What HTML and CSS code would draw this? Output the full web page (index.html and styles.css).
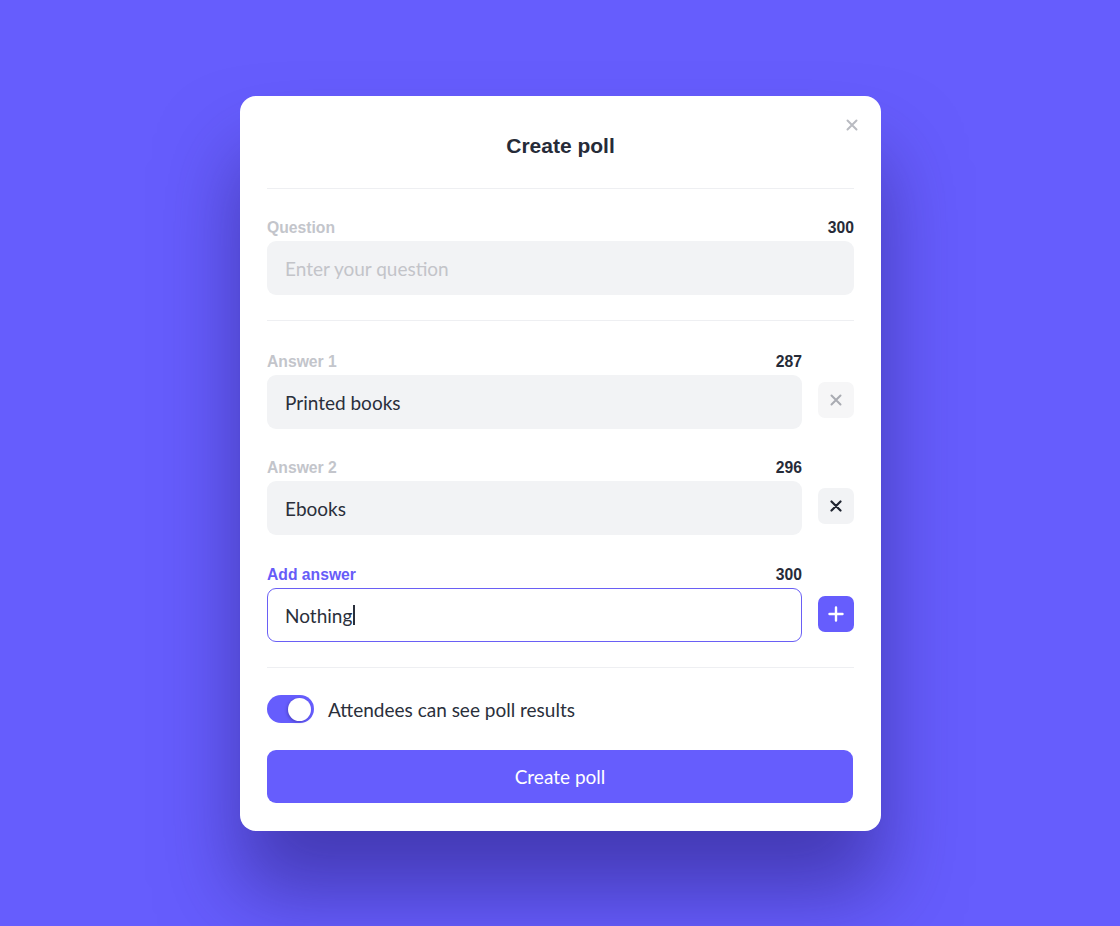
FILE: index.html
```html
<!DOCTYPE html>
<html lang="en">
<head>
    <meta charset="UTF-8"/>
    <meta name="viewport" content="width=device-width, initial-scale=1.0"/>
    <title>Create poll</title>
    <link rel="stylesheet" href="styles.css">
</head>
<body>
<div class="modal">
    <button class="close" aria-label="Close">
        <svg width="12" height="12" viewBox="0 0 12 12"><path d="M1.5 1.5l9 9M10.5 1.5l-9 9" stroke="currentColor" stroke-width="2" stroke-linecap="round"/></svg>
    </button>
    <h1 class="title">Create poll</h1>

    <div class="section">
        <div class="field">
            <div class="field-head">
                <span class="label">Question</span>
                <span class="count">300</span>
            </div>
            <input type="text" class="input" placeholder="Enter your question"/>
        </div>
    </div>

    <div class="section answers">
        <div class="answer">
            <div class="field">
                <div class="field-head">
                    <span class="label">Answer 1</span>
                    <span class="count">287</span>
                </div>
                <input type="text" class="input" value="Printed books"/>
            </div>
            <button class="icon-btn remove muted">
                <svg width="12" height="12" viewBox="0 0 12 12"><path d="M1.5 1.5l9 9M10.5 1.5l-9 9" stroke="currentColor" stroke-width="2" stroke-linecap="round"/></svg>
            </button>
        </div>
        <div class="answer">
            <div class="field">
                <div class="field-head">
                    <span class="label">Answer 2</span>
                    <span class="count">296</span>
                </div>
                <input type="text" class="input" value="Ebooks"/>
            </div>
            <button class="icon-btn remove">
                <svg width="12" height="12" viewBox="0 0 12 12"><path d="M1.5 1.5l9 9M10.5 1.5l-9 9" stroke="currentColor" stroke-width="2.2" stroke-linecap="round"/></svg>
            </button>
        </div>
        <div class="answer new">
            <div class="field">
                <div class="field-head">
                    <span class="label active">Add answer</span>
                    <span class="count">300</span>
                </div>
                <div class="input focused">Nothing<span class="caret"></span></div>
            </div>
            <button class="icon-btn add">
                <svg width="16" height="16" viewBox="0 0 16 16"><path d="M8 1.5v13M1.5 8h13" stroke="currentColor" stroke-width="2.4" stroke-linecap="round"/></svg>
            </button>
        </div>
    </div>

    <div class="section footer">
        <label class="toggle-row">
            <span class="toggle"><span class="knob"></span></span>
            <span class="toggle-text">Attendees can see poll results</span>
        </label>
        <button class="submit">Create poll</button>
    </div>
</div>
</body>
</html>
```

FILE: styles.css
```css
* {
    margin: 0;
    padding: 0;
    box-sizing: border-box;
}
body {
    height: 100vh;
    background: #665dfd;
    font-family: "Liberation Sans", Arial, sans-serif;
    padding: 96px 0 0 240px;
}
.modal {
    position: relative;
    width: 641px;
    height: 735px;
    background: #fff;
    border-radius: 16px;
    padding: 0 27px;
    box-shadow: 0 60px 80px rgba(40, 30, 120, 0.55);
}
.close {
    position: absolute;
    top: 22px;
    right: 22px;
    width: 14px;
    height: 14px;
    border: none;
    background: none;
    color: #b9bbc1;
    display: flex;
    align-items: center;
    justify-content: center;
}
.title {
    text-align: center;
    font-size: 21px;
    font-weight: bold;
    color: #262b38;
    padding: 37px 0 29px;
    line-height: 26px;
    border-bottom: 1px solid #eeeff2;
}
.section {
    border-bottom: 1px solid #eeeff2;
    padding: 30px 0 25px;
}
.field {
    flex: 1;
}
.field-head {
    display: flex;
    justify-content: space-between;
    align-items: baseline;
    font-size: 15.7px;
    font-weight: bold;
    line-height: 18px;
    margin-bottom: 4px;
}
.label {
    color: #c3c5cb;
}
.label.active {
    color: #675cf8;
}
.count {
    color: #262b38;
}
.input {
    display: flex;
    align-items: center;
    width: 100%;
    height: 54px;
    border: none;
    outline: none;
    border-radius: 9px;
    background: #f2f3f5;
    padding: 0 18px;
    font-family: Lato, "Open Sans", sans-serif;
    font-size: 19px;
    color: #2a2f3b;
}
.input::placeholder {
    color: #c3c4c9;
}
.input.focused {
    background: #fff;
    border: 1.5px solid #6a5ff5;
    padding: 0 17px;
}
.caret {
    display: inline-block;
    width: 1.5px;
    height: 20px;
    background: #2a2f3b;
    margin-left: 1px;
}
.answers {
    padding-top: 32px;
    padding-bottom: 25px;
    display: flex;
    flex-direction: column;
    gap: 30px;
}
.answer {
    display: flex;
    align-items: flex-end;
    gap: 16px;
}
.answer.new {
    margin-top: 1px;
}
.icon-btn {
    width: 36px;
    height: 36px;
    border: none;
    border-radius: 7px;
    margin-bottom: 11px;
    display: flex;
    align-items: center;
    justify-content: center;
    flex-shrink: 0;
}
.remove {
    background: #f2f3f5;
    color: #1f2430;
}
.remove.muted {
    background: #f6f6f7;
    color: #a9abb2;
}
.add {
    background: #665dfd;
    color: #fff;
    margin-bottom: 10px;
}
.footer {
    border-bottom: none;
    padding: 27px 0 0;
}
.toggle-row {
    display: flex;
    align-items: center;
    gap: 14px;
}
.toggle {
    width: 47px;
    height: 28px;
    border-radius: 14px;
    background: #665dfd;
    display: flex;
    align-items: center;
    justify-content: flex-end;
    padding: 3px;
}
.knob {
    width: 23px;
    height: 23px;
    border-radius: 50%;
    background: #fff;
    box-shadow: -1px 1px 3px rgba(30, 20, 100, 0.35);
}
.toggle-text {
    font-family: Lato, "Open Sans", sans-serif;
    font-size: 19px;
    color: #2a2f3b;
}
.submit {
    margin-top: 27px;
    width: 586px;
    height: 53px;
    border: none;
    border-radius: 9px;
    background: #665dfd;
    color: #fff;
    font-family: Lato, "Open Sans", sans-serif;
    font-size: 19px;
}
```
